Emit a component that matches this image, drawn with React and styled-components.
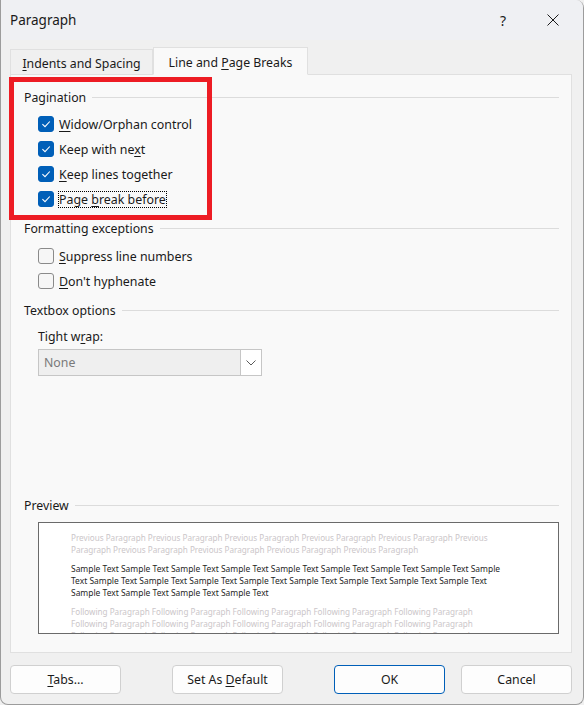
import React from "react";
import styled, { createGlobalStyle } from "styled-components";

const GlobalStyle = createGlobalStyle`
  html, body { margin: 0; padding: 0; background: #f0f0f0; }
  body { font-family: "Noto Sans", "Open Sans", sans-serif; color: #1a1a1a; }
  * { box-sizing: border-box; }
`;

const Window = styled.div`
  position: relative;
  width: 584px;
  height: 705px;
  border: 1px solid #9c9c9c;
  border-top: none;
  border-radius: 0 8px 8px 8px;
  background: #f0f0f0;
  overflow: hidden;
  display: flex;
  flex-direction: column;
`;

const TitleBar = styled.div`
  height: 40px;
  display: flex;
  align-items: center;
  padding-left: 9px;
  background: #eff0f3;
`;

const Title = styled.div`
  flex: 1;
  font-size: 13.5px;
  color: #1a1a1a;
`;

const TitleButton = styled.div`
  width: ${(p) => p.$w}px;
  height: 40px;
  display: flex;
  align-items: center;
  justify-content: center;
  font-size: 14px;
  color: #1a1a1a;
`;

const Body = styled.div`
  flex: 1;
  display: flex;
  flex-direction: column;
  padding: 7px 11px 0 9px;
`;

const TabStrip = styled.div`
  display: flex;
  align-items: flex-end;
  height: 27px;
  position: relative;
  z-index: 1;
`;

const Tab = styled.div`
  width: ${(p) => (p.$active ? 155 : 143)}px;
  height: ${(p) => (p.$active ? 28 : 25)}px;
  display: flex;
  align-items: center;
  justify-content: center;
  font-size: 12.3px;
  background: ${(p) => (p.$active ? "#f9f9f9" : "#f0f0f0")};
  border: 1px solid #e0e0e0;
  border-bottom: ${(p) => (p.$active ? "1px solid #f9f9f9" : "none")};
  margin-bottom: ${(p) => (p.$active ? -1 : 0)}px;
  padding-top: ${(p) => (p.$active ? 3 : 2)}px;
`;

const Panel = styled.div`
  height: 579px;
  background: #f9f9f9;
  border: 1px solid #e0e0e0;
  padding: 13px 12px 0 13px;
  display: flex;
  flex-direction: column;
`;

const Legend = styled.div`
  height: 18px;
  display: flex;
  align-items: center;
  font-size: 12.3px;
  margin-top: ${(p) => p.$mt || 0}px;
  &::after {
    content: "";
    flex: 1;
    height: 1px;
    background: #dcdcdc;
    margin-left: 6px;
  }
`;

const CheckList = styled.div`
  display: flex;
  flex-direction: column;
  gap: 5px;
  margin-top: ${(p) => p.$mt}px;
  padding-left: 14px;
`;

const CheckRow = styled.div`
  height: 20px;
  display: flex;
  align-items: center;
  gap: 4px;
  font-size: 12.4px;
`;

const Box = styled.div`
  width: 16px;
  height: 16px;
  border-radius: 3px;
  display: flex;
  align-items: center;
  justify-content: center;
  background: ${(p) => (p.$checked ? "#005fb8" : "#f6f6f6")};
  border: 1px solid ${(p) => (p.$checked ? "#005fb8" : "#8a8a8a")};
`;

const Label = styled.span`
  padding: 0;
  line-height: 15px;
  border: 1px dotted ${(p) => (p.$focus ? "#000" : "transparent")};
`;

const U = styled.span`
  text-decoration: underline;
  text-underline-offset: 2px;
`;

const FieldLabel = styled.div`
  height: 18px;
  display: flex;
  align-items: center;
  font-size: 12.3px;
  margin-top: 8px;
  padding-left: 14px;
`;

const SelectWrap = styled.div`
  margin: 4px 0 0 14px;
  width: 224px;
  height: 27px;
  display: flex;
  border: 1px solid #c6c6c6;
  background: #efefef;
`;

const SelectValue = styled.div`
  flex: 1;
  display: flex;
  align-items: center;
  padding-left: 5px;
  font-size: 12.3px;
  color: #7a7a7a;
`;

const SelectButton = styled.div`
  width: 21px;
  display: flex;
  align-items: center;
  justify-content: center;
  background: #ffffff;
  border-left: 1px solid #c6c6c6;
`;

const PreviewSection = styled.div`
  margin-top: auto;
  padding-bottom: 18px;
  display: flex;
  flex-direction: column;
`;

const PreviewBox = styled.div`
  margin: 8px 0 0 14px;
  height: 112px;
  background: #ffffff;
  border: 1px solid #6a6a6a;
  overflow: hidden;
  padding: 9px 0 0 32px;
`;

const PreviewPara = styled.div`
  margin-bottom: 7px;
  color: ${(p) => (p.$ghost ? "#cbc6c9" : "#1f1f1f")};
  font-size: ${(p) => (p.$ghost ? 8.15 : 8.45)}px;
`;

const PreviewLine = styled.div`
  line-height: 12px;
  white-space: nowrap;
`;

const Footer = styled.div`
  display: grid;
  grid-template-columns: 111px 51px 111px 51px 111px 16px 111px;
  margin-top: 12px;
`;

const Button = styled.div`
  grid-column: ${(p) => p.$col};
  height: 29px;
  display: flex;
  align-items: center;
  justify-content: center;
  font-size: 12.3px;
  background: #fdfdfd;
  border: 1px solid ${(p) => (p.$primary ? "#005fb8" : "#d0d0d0")};
  border-radius: 4px;
`;

const Highlight = styled.div`
  position: absolute;
  left: 8px;
  top: 77px;
  width: 203px;
  height: 143px;
  border: 5px solid #ed1c24;
  pointer-events: none;
`;

const Check = () => (
  <svg width="12" height="12" viewBox="0 0 12 12">
    <path d="M2.4 6.2 L5 8.7 L9.8 3.5" fill="none" stroke="#fff" strokeWidth="1.1" />
  </svg>
);

const CheckItem = ({ checked, focus, children }) => (
  <CheckRow>
    <Box $checked={checked}>{checked && <Check />}</Box>
    <Label $focus={focus}>{children}</Label>
  </CheckRow>
);

const prev = [
  "Previous Paragraph Previous Paragraph Previous Paragraph Previous Paragraph Previous Paragraph Previous",
  "Paragraph Previous Paragraph Previous Paragraph Previous Paragraph Previous Paragraph",
];
const sample = [
  "Sample Text Sample Text Sample Text Sample Text Sample Text Sample Text Sample Text Sample Text Sample",
  "Text Sample Text Sample Text Sample Text Sample Text Sample Text Sample Text Sample Text Sample Text",
  "Sample Text Sample Text Sample Text Sample Text",
];
const follow = [
  "Following Paragraph Following Paragraph Following Paragraph Following Paragraph Following Paragraph",
  "Following Paragraph Following Paragraph Following Paragraph Following Paragraph Following Paragraph",
  "Following Paragraph Following Paragraph Following Paragraph Following Paragraph Following Paragraph",
];

export default function App() {
  return (
    <>
      <GlobalStyle />
      <Window>
        <TitleBar>
          <Title>Paragraph</Title>
          <TitleButton $w={40}>?</TitleButton>
          <TitleButton $w={60}>
            <svg width="12" height="12" viewBox="0 0 12 12">
              <path d="M0.5 0.5 L11.5 11.5 M11.5 0.5 L0.5 11.5" stroke="#1a1a1a" strokeWidth="1" />
            </svg>
          </TitleButton>
        </TitleBar>
        <Body>
          <TabStrip>
            <Tab>
              <span>
                <U>I</U>ndents and Spacing
              </span>
            </Tab>
            <Tab $active>
              <span>
                Line and <U>P</U>age Breaks
              </span>
            </Tab>
          </TabStrip>
          <Panel>
            <Legend>Pagination</Legend>
            <CheckList $mt={8}>
              <CheckItem checked>
                <U>W</U>idow/Orphan control
              </CheckItem>
              <CheckItem checked>
                Keep with ne<U>x</U>t
              </CheckItem>
              <CheckItem checked>
                <U>K</U>eep lines together
              </CheckItem>
              <CheckItem checked focus>
                Page <U>b</U>reak before
              </CheckItem>
            </CheckList>
            <Legend $mt={10}>Formatting exceptions</Legend>
            <CheckList $mt={9}>
              <CheckItem>
                <U>S</U>uppress line numbers
              </CheckItem>
              <CheckItem>
                <U>D</U>on't hyphenate
              </CheckItem>
            </CheckList>
            <Legend $mt={10}>Textbox options</Legend>
            <FieldLabel>
              <span>
                Tight w<U>r</U>ap:
              </span>
            </FieldLabel>
            <SelectWrap>
              <SelectValue>None</SelectValue>
              <SelectButton>
                <svg width="10" height="6" viewBox="0 0 10 6">
                  <path d="M0.5 0.5 L5 5 L9.5 0.5" fill="none" stroke="#5a5a5a" strokeWidth="1" />
                </svg>
              </SelectButton>
            </SelectWrap>
            <PreviewSection>
              <Legend>Preview</Legend>
              <PreviewBox>
                <PreviewPara $ghost>
                  {prev.map((l, i) => (
                    <PreviewLine key={i}>{l}</PreviewLine>
                  ))}
                </PreviewPara>
                <PreviewPara>
                  {sample.map((l, i) => (
                    <PreviewLine key={i}>{l}</PreviewLine>
                  ))}
                </PreviewPara>
                <PreviewPara $ghost>
                  {follow.map((l, i) => (
                    <PreviewLine key={i}>{l}</PreviewLine>
                  ))}
                </PreviewPara>
              </PreviewBox>
            </PreviewSection>
          </Panel>
          <Footer>
            <Button $col={1}>
              <span>
                <U>T</U>abs...
              </span>
            </Button>
            <Button $col={3}>
              <span>
                Set As <U>D</U>efault
              </span>
            </Button>
            <Button $col={5} $primary>
              OK
            </Button>
            <Button $col={7}>Cancel</Button>
          </Footer>
        </Body>
        <Highlight />
      </Window>
    </>
  );
}
